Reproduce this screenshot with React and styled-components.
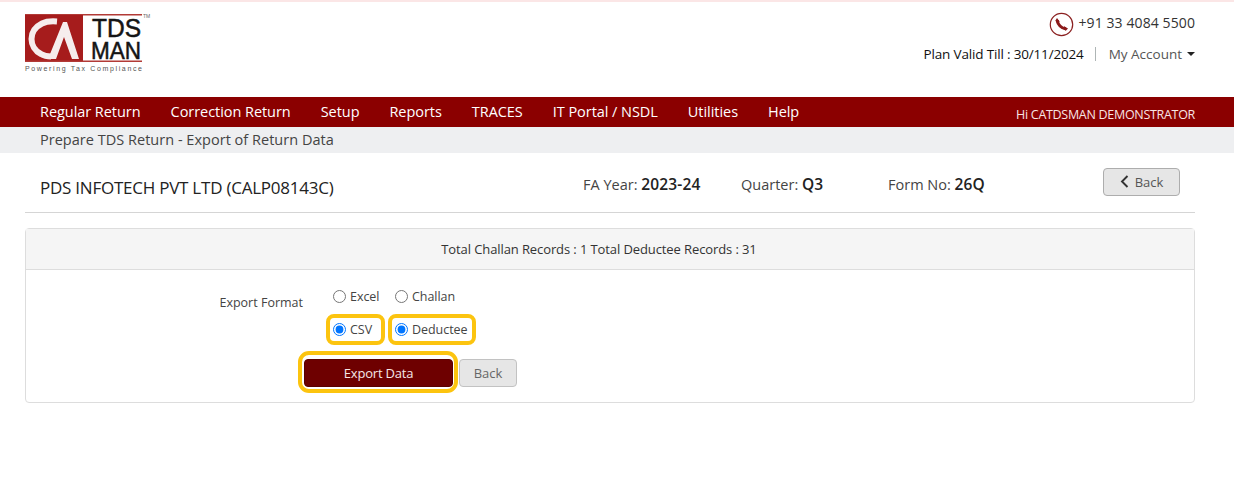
import React from 'react';
import styled, { createGlobalStyle } from 'styled-components';

const GlobalStyle = createGlobalStyle`
  html, body {
    margin: 0;
    padding: 0;
    background: #fff;
    font-family: "Open Sans", "Noto Sans", "Liberation Sans", sans-serif;
    color: #333;
  }
`;

const Page = styled.div`
  width: 1234px;
  height: 487px;
  overflow: hidden;
  border-top: 2px solid #fbe6e6;
  box-sizing: border-box;
`;

const TopBar = styled.header`
  height: 95px;
  padding: 11px 39px 0 24px;
  box-sizing: border-box;
  display: flex;
  justify-content: space-between;
`;

const AccountArea = styled.div`
  display: flex;
  flex-direction: column;
  align-items: flex-end;
  margin-top: -1px;
`;

const PhoneLine = styled.div`
  display: flex;
  align-items: center;
  gap: 4px;
  font-size: 14px;
  letter-spacing: 0.1px;
  height: 24px;
  line-height: 20px;
  color: #333;

  span {
    margin-top: -3px;
  }
`;

const AccountLine = styled.div`
  margin-top: 8px;
  display: flex;
  align-items: center;
  font-size: 13.5px;
  height: 20px;
`;

const PlanText = styled.span`
  color: #111;
  letter-spacing: -0.17px;
`;

const Divider = styled.span`
  width: 1px;
  height: 14px;
  background: #aeb5b5;
  margin: 0 13px 0 11px;
`;

const AccountLink = styled.span`
  color: #555;
`;

const Caret = styled.span`
  margin-left: 5px;
  border-left: 4px solid transparent;
  border-right: 4px solid transparent;
  border-top: 4px solid #222;
`;

const NavBar = styled.nav`
  height: 30px;
  background: #8b0000;
  padding: 0 39px 0 40px;
  display: flex;
  align-items: center;
  justify-content: space-between;
  color: #fff;
`;

const NavList = styled.div`
  display: flex;
  gap: 30px;
  font-size: 14.5px;
  letter-spacing: -0.05px;
  margin-top: -2px;
`;

const Greeting = styled.div`
  font-size: 12.5px;
  letter-spacing: -0.3px;
  color: #f8e4e4;
  padding-top: 5px;
`;

const SubBar = styled.div`
  height: 26px;
  background: #eeeff1;
  padding-left: 40px;
  padding-bottom: 2px;
  box-sizing: border-box;
  display: flex;
  align-items: center;
  font-size: 14.5px;
  letter-spacing: 0.02px;
  color: #444;
`;

const Content = styled.main`
  padding: 0 39px 0 25px;
`;

const TitleRow = styled.div`
  height: 59px;
  padding-left: 15px;
  display: flex;
  align-items: center;
  border-bottom: 1px solid #d5d5d5;
`;

const Company = styled.div`
  width: 543px;
  font-size: 17px;
  letter-spacing: -0.24px;
  color: #222;
  padding-top: 9px;
`;

const Meta = styled.div`
  font-size: 14.5px;
  width: ${p => p.$width}px;
  color: #444;
  padding-top: 2px;

  b {
    font-weight: 600;
    color: #222;
    font-size: 15.5px;
    letter-spacing: 0.15px;
  }
`;

const BackTop = styled.button`
  margin-left: auto;
  margin-right: 15px;
  margin-top: -2px;
  width: 77px;
  height: 28px;
  display: flex;
  align-items: center;
  justify-content: center;
  gap: 6px;
  background: #e6e6e6;
  border: 1px solid #adadad;
  border-radius: 4px;
  font-family: inherit;
  font-size: 13px;
  color: #555;
  padding: 0;
`;

const Panel = styled.section`
  margin-top: 15px;
  height: 175px;
  box-sizing: border-box;
  border: 1px solid #ddd;
  border-radius: 4px;
`;

const PanelHead = styled.div`
  height: 40px;
  background: #f5f5f5;
  border-bottom: 1px solid #ddd;
  padding-right: 22px;
  display: flex;
  align-items: center;
  justify-content: center;
  font-size: 13px;
  letter-spacing: -0.1px;
  color: #333;
`;

const FormGrid = styled.div`
  display: grid;
  grid-template-columns: 277px auto;
  column-gap: 23px;
`;

const FieldLabel = styled.div`
  text-align: right;
  font-size: 12.5px;
  color: #444;
  padding-top: 24px;
`;

const OptionColumn = styled.div`
  display: flex;
  flex-direction: column;
`;

const OptionRow = styled.div`
  display: flex;
  margin-top: ${p => p.$top}px;
`;

const Option = styled.label`
  display: flex;
  align-items: center;
  box-sizing: border-box;
  width: ${p => p.$width}px;
  height: 31px;
  padding-left: 3px;
  gap: 4px;
  margin-right: 3px;
  font-size: 12.5px;
  letter-spacing: -0.05px;
  color: #444;
  border: 4px solid ${p => (p.$marked ? '#fcc40f' : 'transparent')};
  border-radius: 8px;
`;

const Radio = styled.input`
  width: 13px;
  height: 13px;
  margin: 0;
`;

const ButtonRow = styled.div`
  display: flex;
  align-items: center;
  margin-left: -28px;
  margin-top: 6px;
`;

const ExportFrame = styled.div`
  padding: 4px 1px 2px 2px;
  border: 4px solid #fcc40f;
  border-radius: 11px;
`;

const ExportButton = styled.button`
  display: block;
  width: 149px;
  height: 28px;
  background: #6e0000;
  border: 1px solid #5a0000;
  border-radius: 4px;
  color: #f6e7e7;
  font-family: inherit;
  font-size: 13px;
  letter-spacing: -0.2px;
  padding: 0;
`;

const PlainButton = styled.button`
  width: 58px;
  height: 28px;
  margin: 2px 0 0 1px;
  background: #e6e6e6;
  border: 1px solid #c2c2c2;
  border-radius: 4px;
  color: #666;
  font-family: inherit;
  font-size: 13px;
  padding: 0;
`;

const Logo = () => (
  <svg width="130" height="62" viewBox="0 0 130 62">
    <rect x="1" y="1" width="117" height="1.5" fill="#b23a36" />
    <rect x="1" y="2" width="58" height="46" fill="#a61c1c" />
    <rect x="1" y="47.5" width="117" height="1.5" fill="#b23a36" />
    <path d="M33 8.5 C27 8 22 8.5 18 10.5 C11 14 7.5 20 7.5 26 C7.5 32 11 38 17 41 C20 42.8 23 43.5 27 43.5" fill="none" stroke="#f6eded" strokeWidth="6" />
    <path d="M24 46 L39 9 H43 L55 46 H48 L40 24 L32 46 Z" fill="#f6eded" />
    <text x="68" y="24" fontFamily="Liberation Sans" fontSize="25" fill="#151515" stroke="#151515" strokeWidth="0.5" textLength="49" lengthAdjust="spacingAndGlyphs">TDS</text>
    <text x="67" y="46" fontFamily="Liberation Sans" fontSize="24" fill="#151515" stroke="#151515" strokeWidth="0.5" textLength="50" lengthAdjust="spacingAndGlyphs">MAN</text>
    <text x="119" y="5" fontFamily="Liberation Sans" fontSize="5" fill="#666">TM</text>
    <text x="1" y="58" fontFamily="Liberation Sans" fontSize="7" fill="#555" textLength="117">Powering Tax Compliance</text>
  </svg>
);

const PhoneIcon = () => (
  <svg width="25" height="25" viewBox="0 0 25 25">
    <circle cx="12.5" cy="12.5" r="11.2" fill="#fff" stroke="#8b2020" strokeWidth="1.2" />
    <path d="M8.3 8.2 C8.6 12.4 12.4 16.4 16.8 16.8" fill="none" stroke="#8b1a1a" strokeWidth="3" />
    <path d="M8 6 L10.6 9.6 L8 11.4 L6.4 8.4 Z M19 16.6 L15.2 14.2 L13.6 16.8 L16.8 18.8 Z" fill="#8b1a1a" />
  </svg>
);

const Chevron = () => (
  <svg width="9" height="13" viewBox="0 0 9 13">
    <path d="M7.5 1 L2 6.5 L7.5 12" fill="none" stroke="#333" strokeWidth="1.9" />
  </svg>
);

const menu = ['Regular Return', 'Correction Return', 'Setup', 'Reports', 'TRACES', 'IT Portal / NSDL', 'Utilities', 'Help'];

export default function App() {
  return (
    <Page>
      <GlobalStyle />
      <TopBar>
        <Logo />
        <AccountArea>
          <PhoneLine>
            <PhoneIcon />
            <span>+91 33 4084 5500</span>
          </PhoneLine>
          <AccountLine>
            <PlanText>Plan Valid Till : 30/11/2024</PlanText>
            <Divider />
            <AccountLink>My Account</AccountLink>
            <Caret />
          </AccountLine>
        </AccountArea>
      </TopBar>
      <NavBar>
        <NavList>
          {menu.map(item => (
            <span key={item}>{item}</span>
          ))}
        </NavList>
        <Greeting>Hi CATDSMAN DEMONSTRATOR</Greeting>
      </NavBar>
      <SubBar>Prepare TDS Return - Export of Return Data</SubBar>
      <Content>
        <TitleRow>
          <Company>PDS INFOTECH PVT LTD (CALP08143C)</Company>
          <Meta $width={158}>FA Year: <b>2023-24</b></Meta>
          <Meta $width={147}>Quarter: <b>Q3</b></Meta>
          <Meta $width={120}>Form No: <b>26Q</b></Meta>
          <BackTop>
            <Chevron />
            Back
          </BackTop>
        </TitleRow>
        <Panel>
          <PanelHead>Total Challan Records : 1 Total Deductee Records : 31</PanelHead>
          <FormGrid>
            <FieldLabel>Export Format</FieldLabel>
            <OptionColumn>
              <OptionRow $top={11}>
                <Option $width={59}>
                  <Radio type="radio" name="format-a" readOnly />
                  Excel
                </Option>
                <Option $width={88}>
                  <Radio type="radio" name="format-b" readOnly />
                  Challan
                </Option>
              </OptionRow>
              <OptionRow $top={2}>
                <Option $width={59} $marked>
                  <Radio type="radio" name="format-a" defaultChecked />
                  CSV
                </Option>
                <Option $width={88} $marked>
                  <Radio type="radio" name="format-b" defaultChecked />
                  Deductee
                </Option>
              </OptionRow>
              <ButtonRow>
                <ExportFrame>
                  <ExportButton>Export Data</ExportButton>
                </ExportFrame>
                <PlainButton>Back</PlainButton>
              </ButtonRow>
            </OptionColumn>
          </FormGrid>
        </Panel>
      </Content>
    </Page>
  );
}
